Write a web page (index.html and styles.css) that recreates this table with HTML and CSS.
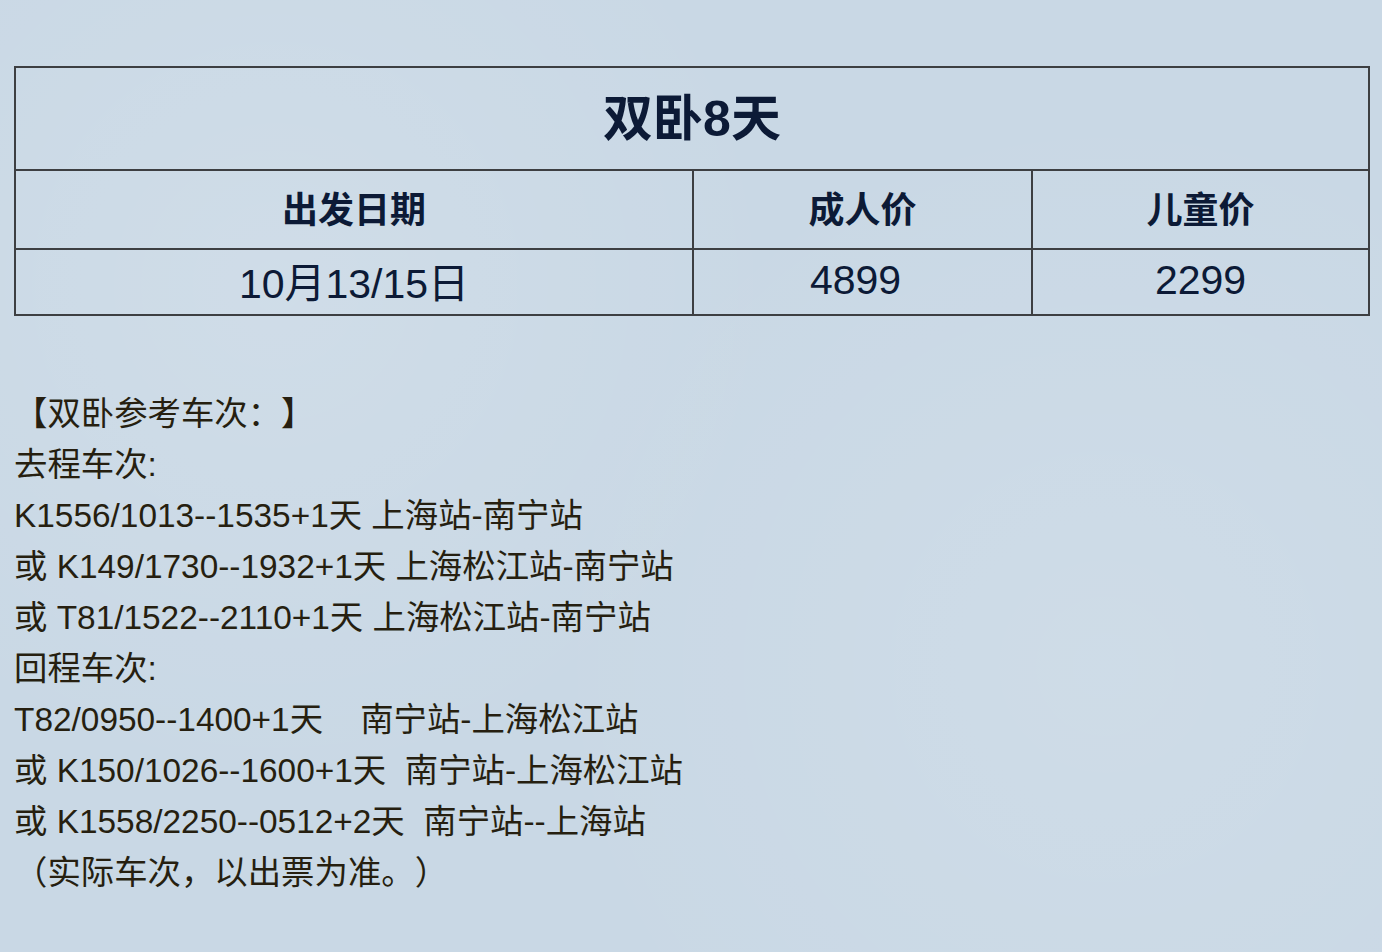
FILE: index.html
```html
<!DOCTYPE html>
<html lang="zh-CN">
<head>
<meta charset="utf-8">
<title>双卧8天</title>
<link rel="stylesheet" href="styles.css">
</head>
<body>
<div class="page">
  <table class="price">
    <colgroup>
      <col class="c1">
      <col class="c2">
      <col class="c3">
    </colgroup>
    <tr class="row-title"><th colspan="3" class="title">双卧8天</th></tr>
    <tr class="row-head">
      <th>出发日期</th>
      <th>成人价</th>
      <th>儿童价</th>
    </tr>
    <tr class="row-data">
      <td>10月13/15日</td>
      <td class="adult">4899</td>
      <td>2299</td>
    </tr>
  </table>
  <div class="trains">
    <p>【双卧参考车次：】</p>
    <p>去程车次:</p>
    <p>K1556/1013--1535+1天 上海站-南宁站</p>
    <p>或 K149/1730--1932+1天 上海松江站-南宁站</p>
    <p>或 T81/1522--2110+1天 上海松江站-南宁站</p>
    <p>回程车次:</p>
    <p>T82/0950--1400+1天&nbsp;&nbsp;&nbsp; 南宁站-上海松江站</p>
    <p>或 K150/1026--1600+1天&nbsp; 南宁站-上海松江站</p>
    <p>或 K1558/2250--0512+2天&nbsp; 南宁站--上海站</p>
    <p>（实际车次，以出票为准。）</p>
  </div>
</div>
</body>
</html>
```
FILE: styles.css
```css
html, body {
  margin: 0;
  padding: 0;
}
body {
  background-color: #c9d8e5;
  background-image:
    radial-gradient(circle at 20% 30%, rgba(255,255,255,0.12), transparent 40%),
    radial-gradient(circle at 80% 70%, rgba(255,255,255,0.10), transparent 45%);
  min-height: 952px;
  font-family: "Liberation Sans", "Noto Sans CJK SC", sans-serif;
  text-spacing-trim: space-all;
}
.page {
  padding: 66px 13px 0 14px;
}
.price {
  width: 1354px;
  border-collapse: collapse;
  border: 2px solid #3d3f42;
  color: #0c1a36;
  table-layout: fixed;
}
.price th, .price td {
  border: 2px solid #3d3f42;
  text-align: center;
  padding: 0;
}
.price .c1 { width: 678px; }
.price .c2 { width: 339px; }
.price .c3 { width: 337px; }
.row-title { height: 103px; }
.row-head { height: 79px; }
.row-data { height: 66px; }
.price th.title {
  font-size: 50px;
  font-weight: bold;
  padding-bottom: 10px;
}
.row-head th {
  font-size: 36px;
  font-weight: bold;
  padding-bottom: 6px;
}
.row-data td {
  font-size: 41px;
  padding-bottom: 4px;
}
.row-data td.adult {
  padding-right: 14px;
}
.trains {
  margin-top: 72px;
  color: #261f10;
  font-size: 33.4px;
  line-height: 51px;
}
.trains p {
  margin: 0;
  white-space: nowrap;
}
```
